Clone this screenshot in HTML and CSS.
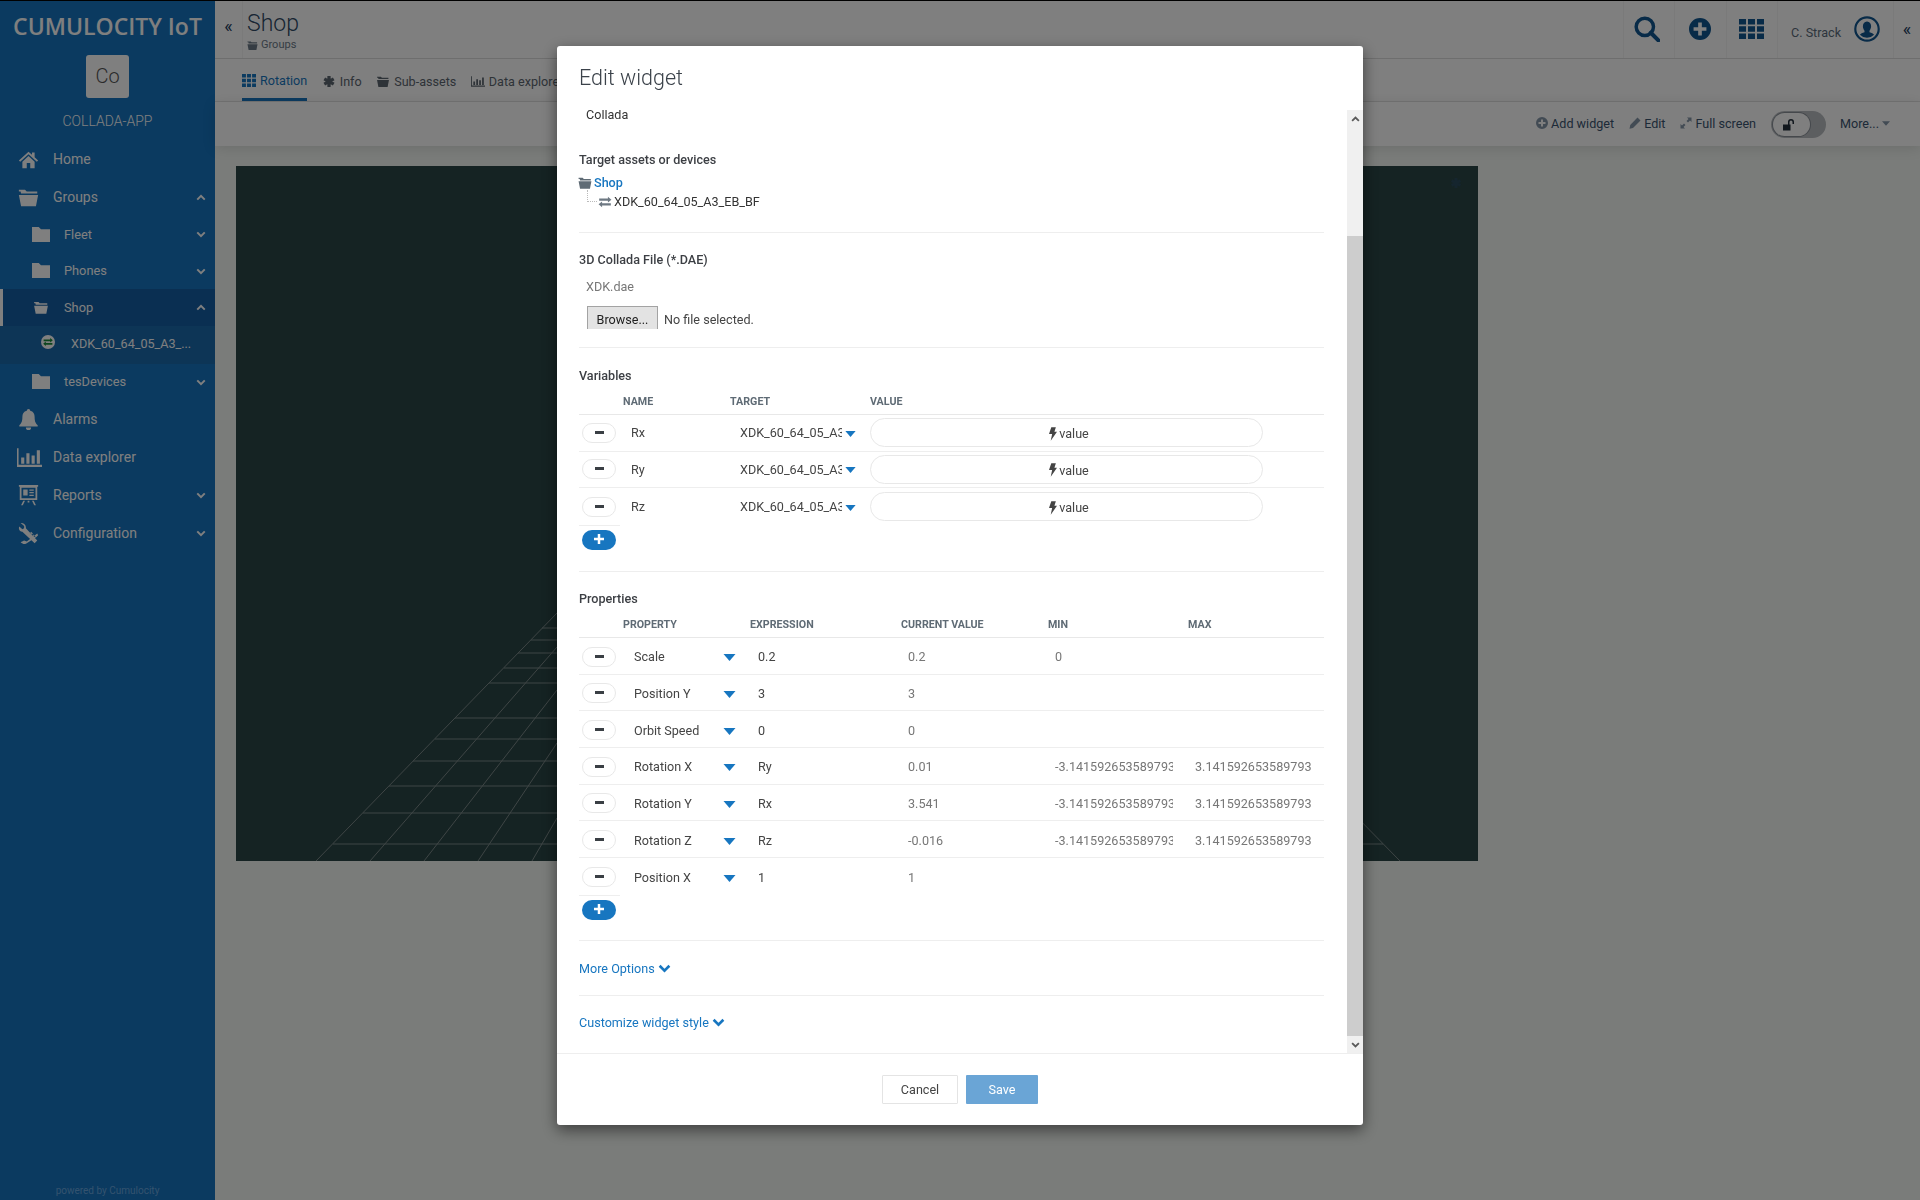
FILE: index.html
```html
<!DOCTYPE html>
<html lang="en">
<head>
    <meta charset="UTF-8">
    <title>Shop - Cumulocity IoT</title>
    <link rel="stylesheet" href="styles.css">
</head>
<body>
    <!-- icon set -->
    <svg class="icon-defs" xmlns="http://www.w3.org/2000/svg">
        <symbol id="i-home" viewBox="0 0 24 24"><path d="M12 3 1 13l1.500 1.500L12 6l9.500 8.500L23 13l-4-3.600V4h-3v2.700zM5 14.500V22h5v-6h4v6h5v-7.500L12 8z"/></symbol>
        <symbol id="i-open" viewBox="0 0 24 24"><path d="M1 3h7l2 2h12v2.500H3.500L3 5H1zM1 9h22l-2.500 13h-17z"/></symbol>
        <symbol id="i-folder" viewBox="0 0 24 20" preserveAspectRatio="none"><path d="M0 0h9l3 3h12v17H0z"/></symbol>
        <symbol id="i-bell" viewBox="0 0 24 24"><path d="M12 0a2 2 0 0 1 2 2c3.500.8 5 3.500 5 7 0 5 1 7 3.500 9.500V20h-21v-1.500C4 16 5 14 5 9c0-3.500 1.500-6.200 5-7a2 2 0 0 1 2-2zM9 21h6a3 3 0 0 1-6 0z"/></symbol>
        <symbol id="i-bars" viewBox="0 0 24 18"><path d="M0 0h1.500v16H24v2H0zM4 9h3v6H4zM9 5h3v10H9zM14 7h3v8h-3zM19 2h3v13h-3z"/></symbol>
        <symbol id="i-report" viewBox="0 0 24 24"><path fill-rule="evenodd" d="M1 0h22v2h-1v15H2V2H1zM4 3v12h16V3zM6 5h5v7H6zM13 5h5v1.500h-5zM13 8h5v1.500h-5zM13 11h5v1.500h-5z"/><path d="M11 18h2v2h-2zM6 18h2l-2.500 5h-2zM16 18h2l2.500 5h-2z"/></symbol>
        <symbol id="i-tools" viewBox="0 0 24 24"><path d="M3 0 7 3.500v2.500l-2 1-3.500-3C0 7 2 10 5 10l14 13 3-3L9 6C9.500 2 6 -.5 3 0z"/><path d="M22 12l-12 9-3-1c-2 1-2.500 1-4 2 3 3 6 2 7 1l11-7 2-2zM15 10l2 2-1 1-2-2zM18 13l2 2-1 1-2-2z"/></symbol>
        <symbol id="i-chev-up" viewBox="0 0 12 8"><path d="M1.500 6.500 6 2l4.500 4.500" fill="none" stroke="currentColor" stroke-width="2.400"/></symbol>
        <symbol id="i-chev-down" viewBox="0 0 12 8"><path d="M1.500 1.500 6 6l4.500-4.500" fill="none" stroke="currentColor" stroke-width="2.400"/></symbol>
        <symbol id="i-th" viewBox="0 0 25 20" preserveAspectRatio="none"><path d="M0 0h7v5.500H0zM9 0h7v5.500H9zM18 0h7v5.500h-7zM0 7.200h7v5.600H0zM9 7.200h7v5.600H9zM18 7.200h7v5.600h-7zM0 14.500h7V20H0zM9 14.500h7V20H9zM18 14.500h7V20h-7z"/></symbol>
        <symbol id="i-asterisk" viewBox="0 0 24 24"><path d="M12 2v20M3.300 7l17.400 10M20.700 7 3.300 17" fill="none" stroke="currentColor" stroke-width="6"/></symbol>
        <symbol id="i-plus-circle" viewBox="0 0 24 24"><path fill-rule="evenodd" d="M12 0a12 12 0 1 0 0 24 12 12 0 0 0 0-24zM10 5h4v5h5v4h-5v5h-4v-5H5v-4h5z"/></symbol>
        <symbol id="i-search" viewBox="0 0 24 24"><circle cx="10" cy="10" r="8" fill="none" stroke="currentColor" stroke-width="3.200"/><path d="m15.500 15.500 7 7" stroke="currentColor" stroke-width="3.800" stroke-linecap="round"/></symbol>
        <symbol id="i-user" viewBox="0 0 24 24"><circle cx="12" cy="12" r="10.800" fill="none" stroke="currentColor" stroke-width="2"/><path d="M12 5c2.500 0 3.800 2 3.800 4.500 0 1.500-.6 3-1.500 4v1.500c2 .6 3.500 1.200 4.200 2.300a9 9 0 0 1-13 0c.7-1.100 2.200-1.700 4.200-2.300v-1.500c-.9-1-1.500-2.500-1.500-4C8.200 7 9.500 5 12 5z"/></symbol>
        <symbol id="i-pencil" viewBox="0 0 24 24"><path d="M17 1l6 6L8 22l-7 1.500L2.500 16z"/></symbol>
        <symbol id="i-expand" viewBox="0 0 24 24"><path d="M14 1h9v9l-3-3-4 4-3-3 4-4zM10 23H1v-9l3 3 4-4 3 3-4 4z"/></symbol>
        <symbol id="i-lock" viewBox="0 0 24 24"><path fill-rule="evenodd" d="M1 11h15v12H1zM11 11V6a6 6 0 0 1 12 0v4h-3V6a3 3 0 0 0-6 0v5z"/></symbol>
        <symbol id="i-exchange" viewBox="0 0 24 24"><path d="M2 6h15V3l6 5-6 5v-3H2zM22 14H7v-3l-6 5 6 5v-3h15z"/></symbol>
        <symbol id="i-bolt" viewBox="0 0 14 24"><path d="M4 0h8l-2.500 8H14L3 24l2.500-12H0z"/></symbol>
        <symbol id="i-caret" viewBox="0 0 12 7"><path d="M0 0h12L6 7z"/></symbol>
        <symbol id="i-plus" viewBox="0 0 12 12"><path d="M4.500 0h3v4.500H12v3H7.500V12h-3V7.500H0v-3h4.500z"/></symbol>
    </svg>

    <div class="app">
        <aside class="sidebar">
            <div class="brand">CUMULOCITY IoT</div>
            <div class="app-tile">Co</div>
            <div class="app-name">COLLADA-APP</div>
            <nav class="nav">
                <a class="nav-item"><svg class="nav-icon"><use href="#i-home"/></svg>Home</a>
                <a class="nav-item"><svg class="nav-icon"><use href="#i-open"/></svg>Groups<svg class="nav-chev"><use href="#i-chev-up"/></svg></a>
                <a class="nav-item nav-sub"><svg class="sub-icon"><use href="#i-folder"/></svg>Fleet<svg class="nav-chev"><use href="#i-chev-down"/></svg></a>
                <a class="nav-item nav-sub"><svg class="sub-icon"><use href="#i-folder"/></svg>Phones<svg class="nav-chev"><use href="#i-chev-down"/></svg></a>
                <a class="nav-item nav-sub nav-active"><svg class="sub-icon"><use href="#i-open"/></svg>Shop<svg class="nav-chev"><use href="#i-chev-up"/></svg></a>
                <a class="nav-item nav-device">
                    <svg class="device-icon" viewBox="0 0 24 24"><circle cx="12" cy="12" r="12" fill="#fff"/><path fill="#1a8a3a" transform="translate(3 3) scale(.75)" d="M2 6h15V3l6 5-6 5v-3H2zM22 14H7v-3l-6 5 6 5v-3h15z"/></svg>
                    XDK_60_64_05_A3_...
                </a>
                <a class="nav-item nav-sub"><svg class="sub-icon"><use href="#i-folder"/></svg>tesDevices<svg class="nav-chev"><use href="#i-chev-down"/></svg></a>
                <a class="nav-item"><svg class="nav-icon"><use href="#i-bell"/></svg>Alarms</a>
                <a class="nav-item"><svg class="nav-icon icon-wide"><use href="#i-bars"/></svg>Data explorer</a>
                <a class="nav-item"><svg class="nav-icon"><use href="#i-report"/></svg>Reports<svg class="nav-chev"><use href="#i-chev-down"/></svg></a>
                <a class="nav-item"><svg class="nav-icon"><use href="#i-tools"/></svg>Configuration<svg class="nav-chev"><use href="#i-chev-down"/></svg></a>
            </nav>
            <div class="powered">powered by Cumulocity</div>
        </aside>

        <main class="main">
            <header class="topbar">
                <div class="collapse-left">&laquo;</div>
                <div class="page-title">
                    <h1>Shop</h1>
                    <div class="crumb"><svg class="crumb-icon"><use href="#i-open"/></svg>Groups</div>
                </div>
                <div class="top-cell"><svg class="top-search"><use href="#i-search"/></svg></div>
                <div class="top-cell"><svg class="top-plus"><use href="#i-plus-circle"/></svg></div>
                <div class="top-cell"><svg class="top-grid"><use href="#i-th"/></svg></div>
                <div class="top-user"><span>C. Strack</span><svg class="top-avatar"><use href="#i-user"/></svg></div>
                <div class="collapse-right">&laquo;</div>
            </header>
            <div class="tabs">
                <a class="tab tab-active"><svg class="tab-icon"><use href="#i-th"/></svg>Rotation</a>
                <a class="tab"><svg class="tab-icon"><use href="#i-asterisk"/></svg>Info</a>
                <a class="tab"><svg class="tab-icon"><use href="#i-open"/></svg>Sub-assets</a>
                <a class="tab"><svg class="tab-icon"><use href="#i-bars"/></svg>Data explorer</a>
            </div>
            <div class="actions">
                <a class="action"><svg class="action-icon"><use href="#i-plus-circle"/></svg>Add widget</a>
                <a class="action"><svg class="action-icon"><use href="#i-pencil"/></svg>Edit</a>
                <a class="action"><svg class="action-icon"><use href="#i-expand"/></svg>Full screen</a>
                <div class="toggle"><div class="toggle-knob"><svg class="lock-icon"><use href="#i-lock"/></svg></div></div>
                <a class="action action-more">More...<svg class="more-caret"><use href="#i-caret"/></svg></a>
            </div>
            <div class="content">
                <div class="canvas">
                    <svg class="grid-lines" viewBox="236 166 1242 695">
                        <g stroke="#7d8a8a" stroke-width="1" fill="none">
                            <path d="M316 861 557 613M370 861 557 647M424 861 557 690M478 861 557 743M532 861 557 818M1400 861 1345 805"/>
                            <path d="M542 628H1174M531 640H1185M518 653H1198M504 668H1212M489 683H1227M455 718H1261M435 739H1281M413 761H1303M389 786H1327M363 813H1353M333 844H1383"/>
                        </g>
                    </svg>
                    <svg class="canvas-gear"><use href="#i-asterisk"/></svg>
                </div>
            </div>
        </main>
    </div>

    <div class="backdrop"></div>

    <div class="modal-layer">
        <div class="modal">
            <div class="modal-header"><h3>Edit widget</h3></div>
            <div class="modal-body">
                <div class="form-area">
                    <section class="section sec-target">
                        <div class="widget-name">Collada</div>
                        <div class="form-label label-target">Target assets or devices</div>
                        <div class="tree-root"><svg class="tree-folder"><use href="#i-open"/></svg>Shop</div>
                        <div class="tree-leaf"><svg class="tree-swap"><use href="#i-exchange"/></svg>XDK_60_64_05_A3_EB_BF</div>
                    </section>

                    <section class="section sec-file">
                        <div class="form-label">3D Collada File (*.DAE)</div>
                        <div class="file-name">XDK.dae</div>
                        <div class="file-row"><span class="browse">Browse...</span><span class="file-none">No file selected.</span></div>
                    </section>

                    <section class="section sec-table">
                        <div class="form-label">Variables</div>
                        <div class="vars-grid grid-head">
                            <span></span><span>Name</span><span>Target</span><span>Value</span>
                        </div>
                        <div class="vars-grid grid-row">
                            <span class="btn-remove"></span><span class="cell-name">Rx</span>
                            <span class="cell-target"><span class="clip">XDK_60_64_05_A3_EB_BF</span><svg class="caret"><use href="#i-caret"/></svg></span>
                            <span class="value-pill"><svg class="bolt"><use href="#i-bolt"/></svg>value</span>
                        </div>
                        <div class="vars-grid grid-row">
                            <span class="btn-remove"></span><span class="cell-name">Ry</span>
                            <span class="cell-target"><span class="clip">XDK_60_64_05_A3_EB_BF</span><svg class="caret"><use href="#i-caret"/></svg></span>
                            <span class="value-pill"><svg class="bolt"><use href="#i-bolt"/></svg>value</span>
                        </div>
                        <div class="vars-grid grid-row grid-row-last">
                            <span class="btn-remove"></span><span class="cell-name">Rz</span>
                            <span class="cell-target"><span class="clip">XDK_60_64_05_A3_EB_BF</span><svg class="caret"><use href="#i-caret"/></svg></span>
                            <span class="value-pill"><svg class="bolt"><use href="#i-bolt"/></svg>value</span>
                        </div>
                        <div class="add-row"><span class="btn-add"><svg class="plus"><use href="#i-plus"/></svg></span></div>
                    </section>

                    <section class="section sec-table sec-props">
                        <div class="form-label">Properties</div>
                        <div class="props-grid grid-head">
                            <span></span><span>Property</span><span>Expression</span><span>Current value</span><span>Min</span><span>Max</span>
                        </div>
                        <div class="props-grid grid-row">
                            <span class="btn-remove"></span>
                            <span class="cell-prop">Scale<svg class="caret"><use href="#i-caret"/></svg></span>
                            <span class="cell-expr">0.2</span><span class="cell-num">0.2</span><span class="cell-num clip">0</span><span class="cell-num"></span>
                        </div>
                        <div class="props-grid grid-row">
                            <span class="btn-remove"></span>
                            <span class="cell-prop">Position Y<svg class="caret"><use href="#i-caret"/></svg></span>
                            <span class="cell-expr">3</span><span class="cell-num">3</span><span class="cell-num clip"></span><span class="cell-num"></span>
                        </div>
                        <div class="props-grid grid-row">
                            <span class="btn-remove"></span>
                            <span class="cell-prop">Orbit Speed<svg class="caret"><use href="#i-caret"/></svg></span>
                            <span class="cell-expr">0</span><span class="cell-num">0</span><span class="cell-num clip"></span><span class="cell-num"></span>
                        </div>
                        <div class="props-grid grid-row">
                            <span class="btn-remove"></span>
                            <span class="cell-prop">Rotation X<svg class="caret"><use href="#i-caret"/></svg></span>
                            <span class="cell-expr">Ry</span><span class="cell-num">0.01</span><span class="cell-num clip">-3.141592653589793</span><span class="cell-num">3.141592653589793</span>
                        </div>
                        <div class="props-grid grid-row">
                            <span class="btn-remove"></span>
                            <span class="cell-prop">Rotation Y<svg class="caret"><use href="#i-caret"/></svg></span>
                            <span class="cell-expr">Rx</span><span class="cell-num">3.541</span><span class="cell-num clip">-3.141592653589793</span><span class="cell-num">3.141592653589793</span>
                        </div>
                        <div class="props-grid grid-row">
                            <span class="btn-remove"></span>
                            <span class="cell-prop">Rotation Z<svg class="caret"><use href="#i-caret"/></svg></span>
                            <span class="cell-expr">Rz</span><span class="cell-num">-0.016</span><span class="cell-num clip">-3.141592653589793</span><span class="cell-num">3.141592653589793</span>
                        </div>
                        <div class="props-grid grid-row grid-row-last">
                            <span class="btn-remove"></span>
                            <span class="cell-prop">Position X<svg class="caret"><use href="#i-caret"/></svg></span>
                            <span class="cell-expr">1</span><span class="cell-num">1</span><span class="cell-num clip"></span><span class="cell-num"></span>
                        </div>
                        <div class="add-row"><span class="btn-add"><svg class="plus"><use href="#i-plus"/></svg></span></div>
                    </section>

                    <section class="section sec-more">
                        <a class="more-link">More Options<svg class="link-chev"><use href="#i-chev-down"/></svg></a>
                    </section>
                    <section class="section sec-style">
                        <a class="more-link">Customize widget style<svg class="link-chev"><use href="#i-chev-down"/></svg></a>
                    </section>
                </div>
                <div class="scrollbar">
                    <div class="scroll-btn"><svg class="scroll-chev"><use href="#i-chev-up"/></svg></div>
                    <div class="scroll-gap"></div>
                    <div class="scroll-thumb"></div>
                    <div class="scroll-btn"><svg class="scroll-chev"><use href="#i-chev-down"/></svg></div>
                </div>
            </div>
            <div class="modal-footer">
                <button class="btn btn-cancel">Cancel</button>
                <button class="btn btn-save">Save</button>
            </div>
        </div>
    </div>
</body>
</html>
```

FILE: styles.css
```css
* {
    box-sizing: border-box;
}
html, body {
    margin: 0;
    padding: 0;
    height: 100%;
    overflow: hidden;
}
body {
    font-family: Roboto, "Liberation Sans", sans-serif;
    font-size: 12.6px;
    color: #444;
    background: #f4f8f4;
}
svg {
    fill: currentColor;
    display: block;
}
.icon-defs {
    display: none;
}
.app {
    display: flex;
    height: 1200px;
    border-top: 1px solid #000;
}

/* sidebar */
.sidebar {
    width: 215px;
    flex: none;
    background: #1674c0;
    color: #fff;
    display: flex;
    flex-direction: column;
}
.brand {
    font-family: "Open Sans", sans-serif;
    font-weight: 600;
    font-size: 23px;
    line-height: 30px;
    margin-top: 10px;
    text-align: center;
    white-space: nowrap;
}
.app-tile {
    width: 43px;
    height: 43px;
    margin: 14px auto 0;
    background: #fff;
    border-radius: 3px;
    color: #555;
    font-size: 20px;
    font-weight: 300;
    line-height: 43px;
    text-align: center;
}
.app-name {
    margin-top: 13px;
    text-align: center;
    font-size: 14px;
    font-weight: 300;
    line-height: 20px;
}
.nav {
    margin-top: 9px;
}
.nav-item {
    display: flex;
    align-items: center;
    height: 38px;
    padding-left: 18px;
    font-size: 14px;
    position: relative;
}
.nav-icon {
    width: 21px;
    height: 21px;
    margin-right: 14px;
    flex: none;
}
.icon-wide {
    width: 25px;
    margin-left: -1px;
    margin-right: 11px;
}
.nav-sub {
    height: 36.500px;
    padding-left: 32px;
    font-size: 12.800px;
}
.sub-icon {
    width: 18px;
    height: 15px;
    margin-right: 14px;
    flex: none;
}
.nav-active {
    background: #145ea4;
    box-shadow: inset 3px 0 0 #fff;
}
.nav-device {
    height: 38px;
    padding-left: 41px;
    padding-bottom: 2px;
    font-size: 12.600px;
    background: #1a6aac;
}
.device-icon {
    width: 14px;
    height: 14px;
    margin-right: 16px;
    margin-top: -4px;
    flex: none;
}
.nav-chev {
    width: 10px;
    height: 7px;
    position: absolute;
    right: 9px;
    top: 50%;
    margin-top: -3px;
}
.powered {
    margin-top: auto;
    padding-bottom: 2px;
    text-align: center;
    font-size: 10px;
    line-height: 14px;
    color: #68a6de;
}

/* page */
.main {
    flex: 1;
    min-width: 0;
    display: flex;
    flex-direction: column;
}
.topbar {
    height: 58px;
    background: #fff;
    border-bottom: 1px solid #dcdcdc;
    display: flex;
    flex: none;
}
.collapse-left {
    width: 28px;
    flex: none;
    border-right: 1px solid #f4f4f4;
    text-align: center;
    font-size: 18px;
    line-height: 50px;
    color: #1e3d5e;
}
.page-title {
    flex: 1;
    padding-left: 4px;
}
.page-title h1 {
    margin: 9px 0 0;
    font-size: 23px;
    font-weight: 300;
    line-height: 27px;
    color: #2f4a66;
}
.crumb {
    display: flex;
    align-items: center;
    font-size: 11px;
    line-height: 14px;
    color: #6c7a88;
    margin-top: 1px;
}
.crumb-icon {
    width: 11px;
    height: 11px;
    margin-right: 3px;
}
.top-cell {
    width: 51.500px;
    flex: none;
    border-left: 1px solid #f4f4f4;
    display: flex;
    align-items: center;
    justify-content: center;
    color: #105690;
    padding-bottom: 1px;
}
.top-search {
    width: 26px;
    height: 26px;
    margin-left: -4px;
}
.top-plus {
    width: 22px;
    height: 22px;
}
.top-grid {
    width: 25px;
    height: 20px;
}
.top-user {
    width: 116px;
    flex: none;
    border-left: 1px solid #f4f4f4;
    padding-left: 13px;
    display: flex;
    align-items: center;
    color: #5b6b7b;
}
.top-user span {
    padding-top: 6px;
    width: 63px;
}
.top-avatar {
    width: 26px;
    height: 26px;
    color: #105690;
    margin-top: -2px;
}
.collapse-right {
    width: 27px;
    flex: none;
    border-left: 1px solid #f4f4f4;
    text-align: center;
    font-size: 18px;
    line-height: 56px;
    color: #1e3d5e;
}
.tabs {
    height: 43px;
    flex: none;
    background: #fff;
    border-bottom: 1px solid #e6e6e6;
    padding-left: 27px;
    display: flex;
}
.tab {
    display: flex;
    align-items: center;
    height: 42px;
    padding-top: 3px;
    margin-right: 14.500px;
    color: #5c6670;
    white-space: nowrap;
}
.tab-icon {
    width: 14px;
    height: 13px;
    margin-right: 4px;
}
.tab-active {
    color: #1776c0;
    border-bottom: 3px solid #1776c0;
}
.actions {
    height: 44px;
    flex: none;
    background: #fff;
    box-shadow: 0 2px 14px rgba(0,0,0,0.12);
    position: relative;
    display: flex;
    align-items: center;
    justify-content: flex-end;
    padding: 0 30px 2px 0;
    color: #3a5470;
}
.action {
    display: flex;
    align-items: center;
    margin-right: 15px;
}
.action-icon {
    width: 12px;
    height: 12px;
    margin-right: 3px;
    color: #8596a8;
}
.action-more {
    margin: 0;
}
.more-caret {
    width: 8px;
    height: 5px;
    margin-left: 3px;
    color: #8596a8;
}
.toggle {
    width: 55px;
    height: 27px;
    border-radius: 14px;
    background: #b8bcc0;
    padding: 2px;
    margin: 2px 14px 0 0;
}
.toggle-knob {
    width: 37px;
    height: 23px;
    border-radius: 12px;
    background: #fff;
    padding: 6px 0 0 9px;
    box-shadow: 0 0 0 1px #8a9098;
}
.lock-icon {
    width: 13px;
    height: 12px;
    color: #24303c;
}
.content {
    flex: 1;
    padding: 20px 0 0 21px;
}
.canvas {
    width: 1242px;
    height: 695px;
    background: #2a4646;
    position: relative;
}
.grid-lines {
    width: 100%;
    height: 100%;
}
.canvas-gear {
    position: absolute;
    right: 16px;
    top: 11px;
    width: 12px;
    height: 12px;
    color: #2a4a5c;
}

/* modal */
.backdrop {
    position: fixed;
    top: 0;
    left: 0;
    right: 0;
    bottom: 0;
    background: rgba(0,0,0,0.5);
}
.modal-layer {
    position: fixed;
    top: 46px;
    left: 0;
    right: 0;
    display: flex;
    justify-content: center;
}
.modal {
    width: 806px;
    height: 1079px;
    background: #fff;
    border-radius: 3px;
    box-shadow: 0 5px 15px rgba(0,0,0,0.5);
    display: flex;
    flex-direction: column;
}
.modal-header {
    height: 64px;
    flex: none;
    padding: 17px 0 0 22px;
}
.modal-header h3 {
    margin: 0;
    font-size: 21.500px;
    font-weight: 300;
    line-height: 30px;
    color: #3b424a;
}
.modal-body {
    height: 944px;
    flex: none;
    display: flex;
    border-bottom: 1px solid #eee;
}
.form-area {
    flex: 1;
    min-width: 0;
    padding: 0 23px 0 22px;
    overflow: hidden;
}
.section {
    border-bottom: 1px solid #eee;
}
.section:last-child {
    border-bottom: none;
}
.sec-target {
    height: 123px;
}
.widget-name {
    height: 10px;
    line-height: 10px;
    padding-left: 7px;
    color: #333;
}
.form-label {
    font-weight: 500;
    line-height: 20px;
    color: #3c3f44;
}
.label-target {
    margin-top: 30px;
}
.tree-root {
    display: flex;
    align-items: center;
    height: 19px;
    margin-top: 3px;
    font-weight: 500;
    color: #1776c0;
}
.tree-folder {
    width: 14px;
    height: 14px;
    margin-right: 2px;
    color: #5f6b75;
    margin-left: -1px;
}
.tree-leaf {
    display: flex;
    align-items: center;
    height: 19px;
    padding-left: 19px;
    color: #333;
    position: relative;
}
/* dotted tree connector */
.tree-leaf::before {
    content: "";
    position: absolute;
    left: 8px;
    top: -2px;
    width: 9px;
    height: 11px;
    border-left: 1px dotted #bbb;
    border-bottom: 1px dotted #bbb;
}
.tree-swap {
    width: 14px;
    height: 14px;
    margin-right: 2px;
    color: #6d7882;
}
.sec-file {
    height: 115px;
    padding-top: 17px;
}
.file-name {
    margin-top: 7px;
    padding-left: 7px;
    line-height: 20px;
    color: #777;
}
.file-row {
    margin-top: 9px;
    padding-left: 8px;
    display: flex;
    align-items: flex-start;
    color: #444;
}
.browse {
    width: 71px;
    height: 23px;
    margin-right: 6px;
    padding-top: 4px;
    text-align: center;
    background: #e3e3e3;
    border: 1px solid #a3a3a3;
    border-bottom: none;
    color: #222;
    line-height: 18px;
}
.file-none {
    padding-top: 5px;
    line-height: 18px;
}
.sec-table {
    padding-top: 18px;
    padding-bottom: 21px;
}
.sec-props {
    padding-top: 17px;
    padding-bottom: 20px;
}
.vars-grid {
    display: grid;
    grid-template-columns: 44px 107px 140px 393px;
}
.props-grid {
    display: grid;
    grid-template-columns: 44px 127px 151px 147px 140px 136px;
}
.grid-head {
    height: 29px;
    padding-top: 6px;
    line-height: 20px;
    font-size: 10.700px;
    font-weight: 700;
    text-transform: uppercase;
    color: #5f6b75;
    border-bottom: 1px solid #e8e8e8;
}
.grid-row {
    height: 36.670px;
    align-items: center;
    border-bottom: 1px solid #eee;
    white-space: nowrap;
}
.props-grid.grid-row {
    padding-top: 2px;
}
.grid-row-last {
    border-bottom: none;
}
.btn-remove {
    width: 34px;
    height: 20px;
    margin-left: 3px;
    border: 1px solid #e8e8e8;
    border-radius: 10px;
    position: relative;
}
.btn-remove::before {
    content: "";
    position: absolute;
    left: 12px;
    top: 7px;
    width: 9px;
    height: 3px;
    background: #3a3f44;
}
.cell-name {
    padding-left: 8px;
    color: #444;
}
.cell-target {
    display: flex;
    align-items: center;
    padding-left: 10px;
    color: #444;
}
.cell-target .clip {
    width: 102px;
}
.cell-target .caret {
    margin-top: 2px;
}
.clip {
    display: block;
    overflow: hidden;
}
.caret {
    width: 11px;
    height: 6px;
    color: #1776c0;
    margin-left: 3px;
    flex: none;
}
.value-pill {
    height: 29px;
    border: 1px solid #e8e8e8;
    border-radius: 15px;
    padding: 2px 0 0 5px;
    display: flex;
    align-items: center;
    justify-content: center;
    color: #444;
}
.bolt {
    width: 8px;
    height: 14px;
    margin-right: 2px;
    color: #444;
}
.add-row {
    width: 41px;
    padding: 4px 0 0 3px;
    border-top: 1px solid #eee;
}
.btn-add {
    display: flex;
    align-items: center;
    justify-content: center;
    width: 34px;
    height: 20px;
    border-radius: 10px;
    background: #1776c0;
    color: #fff;
}
.plus {
    width: 10px;
    height: 10px;
    margin-top: -2px;
}
.cell-prop {
    display: flex;
    align-items: center;
    padding-left: 11px;
    color: #444;
    position: relative;
}
.cell-prop .caret {
    position: absolute;
    left: 100px;
    width: 13px;
    height: 7px;
    margin: 2px 0 0;
}
.cell-expr {
    padding-left: 8px;
    color: #444;
}
.cell-num {
    padding-left: 7px;
    color: #777;
}
.cell-num.clip {
    margin-right: 15px;
}
.more-link {
    display: inline-flex;
    align-items: center;
    line-height: 20px;
    color: #1776c0;
}
.link-chev {
    width: 13px;
    height: 9px;
    margin-left: 3px;
}
.sec-more {
    height: 55px;
    padding-top: 18px;
}
.sec-style {
    padding-top: 17px;
}
.scrollbar {
    width: 16px;
    flex: none;
    background: #f0f0f0;
    display: flex;
    flex-direction: column;
}
.scroll-btn {
    height: 17px;
    flex: none;
    display: flex;
    align-items: center;
    justify-content: center;
    color: #5a5a5a;
}
.scroll-chev {
    width: 9px;
    height: 6px;
}
.scroll-gap {
    height: 109px;
    flex: none;
}
.scroll-thumb {
    flex: 1;
    background: #cdcdcd;
}
.modal-footer {
    flex: 1;
    display: flex;
    justify-content: center;
    padding-top: 21px;
    gap: 8px;
}
.btn {
    height: 29px;
    font-family: inherit;
    font-size: 12.600px;
    border-radius: 1px;
}
.btn-cancel {
    width: 76px;
    background: #fff;
    border: 1px solid #e4e4e4;
    color: #444;
}
.btn-save {
    width: 72px;
    background: #6aa5d6;
    border: none;
    color: #fff;
}
```
